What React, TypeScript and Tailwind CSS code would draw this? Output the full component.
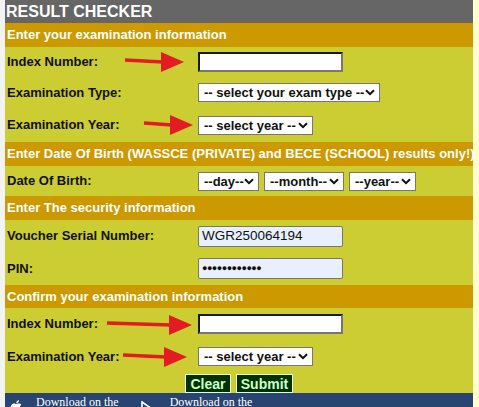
import React from "react";

const Arrow = ({ w }: { w: number }) => (
  <svg width={w} height={22} viewBox={`0 0 ${w} 22`}>
    <line x1={1} y1={9} x2={w - 21} y2={11} stroke="#e31b23" strokeWidth={3.5} />
    <polygon points={`${w - 23},1 ${w},11 ${w - 23},21`} fill="#e31b23" />
  </svg>
);

const Chevron = () => (
  <svg width="10" height="7" viewBox="0 0 10 7" className="shrink-0">
    <path d="M1 1.2 L5 5.2 L9 1.2" fill="none" stroke="#111" strokeWidth="2" />
  </svg>
);

const Select = ({ text, w }: { text: string; w: string }) => (
  <div className={`${w} h-[19px] bg-white border border-[#767676] flex items-center justify-between pl-[5px] pr-[4px] text-[13px] font-bold text-[#111] leading-none whitespace-nowrap`}>
    <span>{text}</span>
    <Chevron />
  </div>
);

const Header = ({ children, h = "h-[24px]" }: { children: React.ReactNode; h?: string }) => (
  <div className={`${h} shrink-0 bg-[#cc9900] flex items-center pl-[2px] text-[13px] font-bold text-white whitespace-nowrap`}>
    {children}
  </div>
);

const Row = ({
  label,
  h,
  children,
  arrow,
}: {
  label: string;
  h: string;
  children: React.ReactNode;
  arrow?: React.ReactNode;
}) => (
  <div className={`${h} shrink-0 flex items-center`}>
    <div className="relative w-[193px] h-full flex items-center pl-[2px] text-[13px] font-bold text-[#111]">
      {label}
      {arrow}
    </div>
    <div className="flex items-center gap-[5px]">{children}</div>
  </div>
);

const InsetInput = () => (
  <div className="w-[145px] h-[20px] bg-white border-2 border-t-[#1a1a1a] border-l-[#1a1a1a] border-b-[#767676] border-r-[#767676]" />
);

const FilledInput = ({ children }: { children: React.ReactNode }) => (
  <div className="w-[145px] h-[21px] bg-[#e8f0fe] border border-[#767676] rounded-[2px] flex items-center pl-[3px] text-[13.5px] text-[#111] leading-none">
    {children}
  </div>
);

export default function App() {
  return (
    <div
      className="w-[479px] h-[407px] overflow-hidden flex bg-[#ffffd0]"
      style={{ fontFamily: '"Liberation Sans", Arial, sans-serif' }}
    >
      <div className="w-[5px] shrink-0 bg-[#f3f3f3]" />
      <div className="w-[468px] shrink-0 flex flex-col bg-[#cccc33]">
        <div className="h-[23px] shrink-0 bg-[#666666] flex items-center pl-[1px] text-[16px] font-bold text-white">
          RESULT CHECKER
        </div>
        <Header>Enter your examination information</Header>
        <Row
          label="Index Number:"
          h="h-[30px]"
          arrow={
            <div className="absolute left-[119px] top-[4px]">
              <Arrow w={60} />
            </div>
          }
        >
          <InsetInput />
        </Row>
        <Row label="Examination Type:" h="h-[31px]">
          <Select text="-- select your exam type --" w="w-[182px]" />
        </Row>
        <Row
          label="Examination Year:"
          h="h-[34px]"
          arrow={
            <div className="absolute left-[138px] top-[6px]">
              <Arrow w={50} />
            </div>
          }
        >
          <Select text="-- select year --" w="w-[115px]" />
        </Row>
        <Header>Enter Date Of Birth (WASSCE (PRIVATE) and BECE (SCHOOL) results only!)</Header>
        <Row label="Date Of Birth:" h="h-[30px]">
          <Select text="--day--" w="w-[61px]" />
          <Select text="--month--" w="w-[80px]" />
          <Select text="--year--" w="w-[67px]" />
        </Row>
        <Header>Enter The security information</Header>
        <Row label="Voucher Serial Number:" h="h-[32px]">
          <FilledInput>WGR250064194</FilledInput>
        </Row>
        <Row label="PIN:" h="h-[33px]">
          <FilledInput>
            <span className="text-[9px] tracking-[-0.5px]">●●●●●●●●●●●●</span>
          </FilledInput>
        </Row>
        <Header h="h-[23px]">Confirm your examination information</Header>
        <Row
          label="Index Number:"
          h="h-[32px]"
          arrow={
            <div className="absolute left-[101px] top-[6px]">
              <Arrow w={86} />
            </div>
          }
        >
          <InsetInput />
        </Row>
        <Row
          label="Examination Year:"
          h="h-[33px]"
          arrow={
            <div className="absolute left-[117px] top-[6px]">
              <Arrow w={65} />
            </div>
          }
        >
          <Select text="-- select year --" w="w-[115px]" />
        </Row>
        <div className="h-[20px] shrink-0 flex justify-center items-start gap-[5px] pt-[1px]">
          <div className="w-[46px] h-[19px] bg-[#003300] border border-[#e0ffe0] flex items-center justify-center text-[14px] font-bold text-[#ccffcc] leading-none">
            Clear
          </div>
          <div className="w-[57px] h-[19px] bg-[#003300] border border-[#e0ffe0] flex items-center justify-center text-[14px] font-bold text-[#ccffcc] leading-none">
            Submit
          </div>
        </div>
        <div className="flex-1 bg-[#284470] flex items-start pt-[3px] text-white text-[12px] leading-none" style={{ fontFamily: '"Liberation Serif", "Times New Roman", serif' }}>
          <svg width="16" height="16" viewBox="0 0 24 24" className="ml-[4px] mt-[3px]" fill="white">
            <path d="M16.4 12.6c0-2.6 2.1-3.8 2.2-3.9-1.2-1.8-3.1-2-3.7-2-1.6-.2-3.1.9-3.9.9-.8 0-2-.9-3.4-.9-1.7 0-3.3 1-4.2 2.6-1.8 3.1-.5 7.7 1.3 10.2.9 1.2 1.900 2.6 3.2 2.6 1.3-.1 1.8-.8 3.300-.8 1.6 0 2 .8 3.4.8 1.4 0 2.3-1.3 3.1-2.5 1-1.4 1.4-2.8 1.4-2.9-.1 0-2.7-1-2.7-4.1zM13.9 5c.7-.9 1.2-2 1-3.2-1 0-2.3.7-3 1.6-.7.8-1.2 2-1.1 3.1 1.2.1 2.3-.6 3.1-1.5z" />
          </svg>
          <span className="ml-[11px]">Download on the</span>
          <svg width="12" height="16" viewBox="0 0 12 16" className="ml-[22px] mt-[5px]">
            <path d="M1 1 L11 8 L1 15 Z" fill="none" stroke="white" strokeWidth="1.6" />
          </svg>
          <span className="ml-[17px]">Download on the</span>
        </div>
      </div>
    </div>
  );
}
